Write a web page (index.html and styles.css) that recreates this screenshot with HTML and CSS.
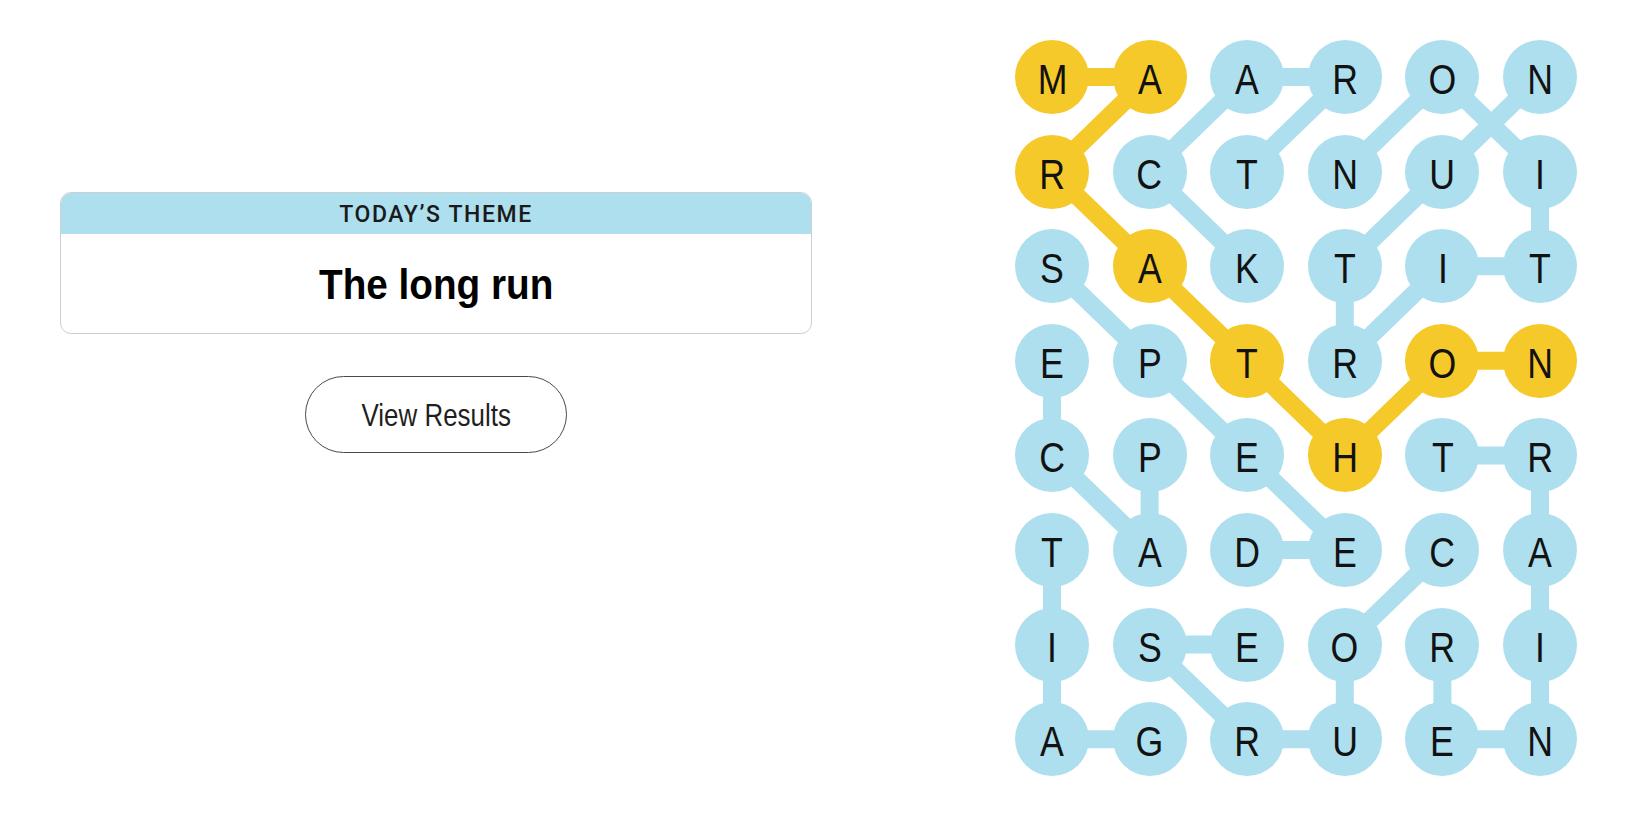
FILE: index.html
```html
<!DOCTYPE html>
<html lang="en">
<head>
<meta charset="utf-8">
<title>Strands</title>
<link rel="stylesheet" href="styles.css">
</head>
<body>
<div class="page">
  <section class="left">
    <div class="theme-card">
      <div class="theme-head">TODAY’S THEME</div>
      <div class="theme-body"><h1 class="theme-title">The long run</h1></div>
    </div>
    <button class="results-btn" type="button"><span class="btn-label">View Results</span></button>
  </section>
  <section class="board">
    <svg class="links" viewBox="0 0 562 736" width="562" height="736" aria-hidden="true">
      <g class="blue">
        <polyline points="232.2,131.6 329.8,37 232.2,37 134.6,131.6 232.2,226.2"/>
        <polyline points="525,37 427.4,131.6 329.8,226.2 329.8,320.8 427.4,226.2 525,226.2 525,131.6 427.4,37 329.8,131.6"/>
        <polyline points="37,226.2 134.6,320.8 232.2,415.4 329.8,510 232.2,510"/>
        <polyline points="134.6,415.4 134.6,510 37,415.4 37,320.8"/>
        <polyline points="134.6,699.2 37,699.2 37,604.6 37,510"/>
        <polyline points="427.4,510 329.8,604.6 329.8,699.2 232.2,699.2 134.6,604.6 232.2,604.6"/>
        <polyline points="427.4,415.4 525,415.4 525,510 525,604.6 525,699.2 427.4,699.2 427.4,604.6"/>
      </g>
      <g class="gold">
        <polyline points="37,37 134.6,37 37,131.6 134.6,226.2 232.2,320.8 329.8,415.4 427.4,320.8 525,320.8"/>
      </g>
    </svg>
    <div class="cells">
      <div class="cell gold"><span>M</span></div><div class="cell gold"><span>A</span></div><div class="cell"><span>A</span></div><div class="cell"><span>R</span></div><div class="cell"><span>O</span></div><div class="cell"><span>N</span></div>
      <div class="cell gold"><span>R</span></div><div class="cell"><span>C</span></div><div class="cell"><span>T</span></div><div class="cell"><span>N</span></div><div class="cell"><span>U</span></div><div class="cell"><span>I</span></div>
      <div class="cell"><span>S</span></div><div class="cell gold"><span>A</span></div><div class="cell"><span>K</span></div><div class="cell"><span>T</span></div><div class="cell"><span>I</span></div><div class="cell"><span>T</span></div>
      <div class="cell"><span>E</span></div><div class="cell"><span>P</span></div><div class="cell gold"><span>T</span></div><div class="cell"><span>R</span></div><div class="cell gold"><span>O</span></div><div class="cell gold"><span>N</span></div>
      <div class="cell"><span>C</span></div><div class="cell"><span>P</span></div><div class="cell"><span>E</span></div><div class="cell gold"><span>H</span></div><div class="cell"><span>T</span></div><div class="cell"><span>R</span></div>
      <div class="cell"><span>T</span></div><div class="cell"><span>A</span></div><div class="cell"><span>D</span></div><div class="cell"><span>E</span></div><div class="cell"><span>C</span></div><div class="cell"><span>A</span></div>
      <div class="cell"><span>I</span></div><div class="cell"><span>S</span></div><div class="cell"><span>E</span></div><div class="cell"><span>O</span></div><div class="cell"><span>R</span></div><div class="cell"><span>I</span></div>
      <div class="cell"><span>A</span></div><div class="cell"><span>G</span></div><div class="cell"><span>R</span></div><div class="cell"><span>U</span></div><div class="cell"><span>E</span></div><div class="cell"><span>N</span></div>
    </div>
  </section>
</div>
</body>
</html>
```

FILE: styles.css
```css
* { box-sizing: border-box; }

html, body {
  margin: 0;
  padding: 0;
  background: #ffffff;
  color: #121212;
  font-family: "Liberation Sans", Arial, sans-serif;
}

.page {
  display: flex;
  align-items: flex-start;
  padding: 40px 0 0 60px;
}

.left {
  width: 752px;
  padding-top: 152px;
  display: flex;
  flex-direction: column;
  align-items: center;
}

.theme-card {
  width: 100%;
  border: 1px solid #cfcfcf;
  border-radius: 11px;
  overflow: hidden;
}

.theme-head {
  height: 41px;
  background: #aedfee;
  display: flex;
  align-items: center;
  justify-content: center;
  font-family: Roboto, "Liberation Sans", sans-serif;
  font-weight: 500;
  font-size: 23px;
  letter-spacing: 1.6px;
  color: #1a1a1a;
  padding-top: 1px;
}

.theme-body {
  height: 99px;
  display: flex;
  align-items: center;
  justify-content: center;
}

.theme-title {
  margin: 0;
  font-size: 43px;
  font-weight: 700;
  line-height: 1;
  color: #000;
  padding-top: 2px;
  transform: scaleX(0.9);
}

.results-btn {
  margin-top: 42px;
  width: 262px;
  height: 77px;
  border: 1px solid #4a4a4a;
  border-radius: 39px;
  background: #fff;
  font-family: "Liberation Sans", Arial, sans-serif;
  font-size: 32px;
  color: #1f1f1f;
  display: flex;
  align-items: center;
  justify-content: center;
  padding: 2px 0 0;
}

.btn-label {
  display: inline-block;
  white-space: nowrap;
  transform: scaleX(0.81);
}

.board {
  position: relative;
  margin-left: 203px;
  width: 562px;
  height: 736px;
}

.links {
  position: absolute;
  left: 0;
  top: 0;
}

.links polyline {
  fill: none;
  stroke-width: 18;
  stroke-linejoin: round;
  stroke-linecap: round;
}

.links .blue polyline { stroke: #aedfee; }
.links .gold polyline { stroke: #f6c92a; }

.cells {
  position: relative;
  display: grid;
  grid-template-columns: repeat(6, 74px);
  grid-auto-rows: 74px;
  column-gap: 23.6px;
  row-gap: 20.6px;
}

.cell {
  width: 74px;
  height: 74px;
  border-radius: 50%;
  background: #aedfee;
  display: flex;
  align-items: center;
  justify-content: center;
  font-size: 42px;
  line-height: 1;
  padding-top: 6px;
  color: #121212;
}

.cell span {
  display: inline-block;
  transform: scaleX(0.85);
}

.cell.gold { background: #f6c92a; }
```
